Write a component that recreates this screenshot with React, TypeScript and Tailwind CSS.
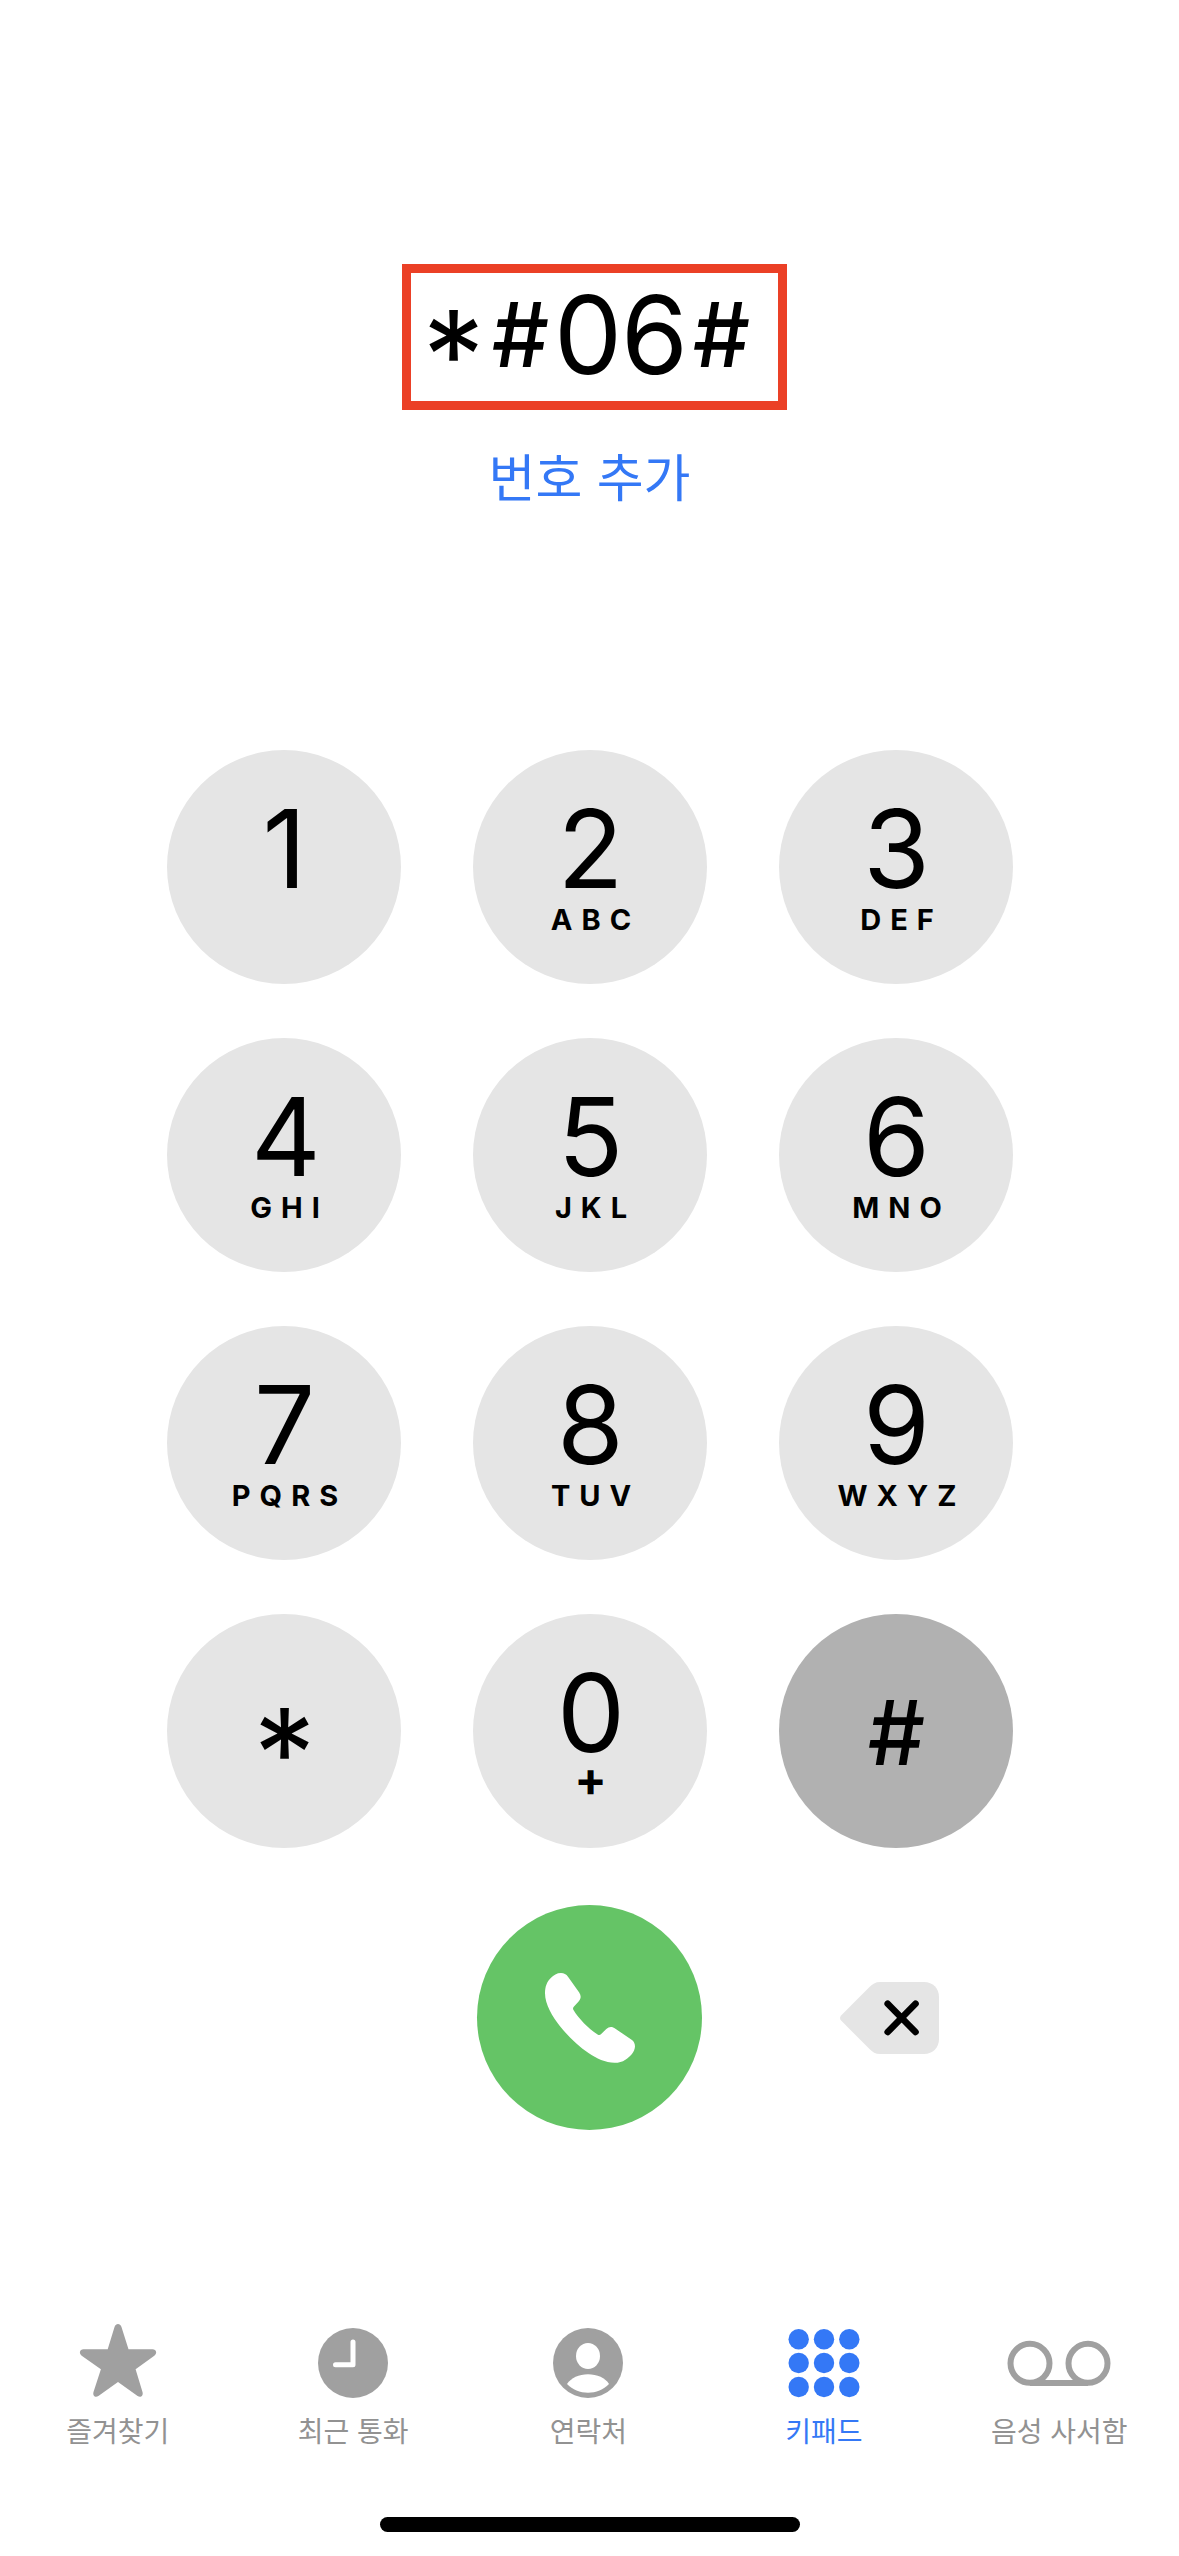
import React, { useState } from "react";

type Key = { symbol: string; letters?: string; pressed?: boolean };

const KEYS: Key[] = [
  { symbol: "1" },
  { symbol: "2", letters: "ABC" },
  { symbol: "3", letters: "DEF" },
  { symbol: "4", letters: "GHI" },
  { symbol: "5", letters: "JKL" },
  { symbol: "6", letters: "MNO" },
  { symbol: "7", letters: "PQRS" },
  { symbol: "8", letters: "TUV" },
  { symbol: "9", letters: "WXYZ" },
  { symbol: "*" },
  { symbol: "0", letters: "+" },
  { symbol: "#", pressed: true },
];

// "*" and "#" have their own sizes and are centred on the digits.
function Glyph({ char }: { char: string }) {
  if (char === "*")
    return <span className="w-[67px] pt-10 text-center text-[124px] leading-[108px]">*</span>;
  if (char === "#")
    return <span className="w-[67px] text-center text-[90px] font-medium leading-[108px]">#</span>;
  return <span className="w-[67px] text-center text-[108px] leading-[108px]">{char}</span>;
}

function KeyButton({ item, onPress }: { item: Key; onPress: (s: string) => void }) {
  const isSign = item.symbol === "*" || item.symbol === "#";
  return (
    <button
      type="button"
      aria-label={item.symbol}
      onClick={() => onPress(item.symbol)}
      className={`flex size-[234px] flex-col items-center rounded-full pl-0.5 text-black ${
        item.pressed ? "bg-[#b1b1b1]" : "bg-[#e5e5e5]"
      } ${isSign ? "justify-center pt-1" : "pt-[45px]"}`}
    >
      <Glyph char={item.symbol} />
      {item.letters === "+" && <span className="text-[48px] font-bold leading-6">+</span>}
      {item.letters && item.letters !== "+" && (
        <span className="pl-[10px] text-[29px] font-bold leading-[34px] tracking-[9px]">{item.letters}</span>
      )}
    </button>
  );
}

function PhoneIcon() {
  return (
    <svg viewBox="0 0 90 90" className="size-[90px]" fill="#fff" aria-hidden="true">
      <path d="M16 0C19 0 21.3 1.2 23 3.7L34.2 19.4C36.4 22.7 36.1 25.8 33.4 28.8L29 33.4C27.9 34.6 27.7 35.6 28.5 37C33.5 45.5 44.5 56.6 52.6 61.5C54 62.3 54.9 62.2 56.2 61L61.3 56.1C64.2 53.4 67.2 53.4 70.4 55.7L86.6 66.8C89 68.4 90 70.6 90 73.6C89.6 79 85.5 83.7 80.4 86.7C77.2 88.9 74 89.8 69.5 89.8C60.5 89.8 51.5 85.3 43.5 80C32.8 72.8 22.7 62.9 14.8 53C7.5 43.8 0 31.5 0 20.3C0 13.8 1.8 8.8 5.8 5C8.7 2 11.8 0 16 0Z" />
    </svg>
  );
}

function DeleteIcon() {
  return (
    <svg viewBox="0 0 99 72" className="h-[72px] w-[99px]" aria-hidden="true">
      <path
        d="M40 0H84C93 0 99 6.5 99 15V57C99 65.5 93 72 84 72H40C35.5 72 32.5 70 29.5 67L1.3 38.8C-.4 37-.4 35 1.3 33.2L29.5 5C32.5 2 35.5 0 40 0Z"
        fill="#e5e5e5"
      />
      <path d="M47.7 21.7L75.5 50M75.5 21.7L47.7 50" stroke="#000" strokeWidth="6.6" strokeLinecap="round" />
    </svg>
  );
}

function TabIcon({ name }: { name: string }) {
  return (
    <svg viewBox="0 0 104 76" className="h-[76px] w-[104px]" fill="currentColor" aria-hidden="true">
      {name === "star" && (
        <path d="M41.7 26.3L48.6 3.7C49.4 1.9 50.5 1 52 1C53.5 1 54.6 1.9 55.4 3.7L62.5 26.3H86.5C90.6 26.3 91.4 30.6 88.3 32.7L69.6 46.3L76.5 69C77.6 73 74.5 75.1 71.6 73L52 59L32.4 73C29.5 75.1 26.4 73 27.5 69L34.9 46.3L15.7 32.7C12.8 30.6 13.4 26.3 17.5 26.3Z" />
      )}
      {name === "clock" && (
        <>
          <circle cx="52" cy="40" r="35" />
          <path d="M52 19V41.7H34.5" fill="none" stroke="#fff" strokeWidth="5" strokeLinecap="round" strokeLinejoin="round" />
        </>
      )}
      {name === "person" && (
        <>
          <circle cx="52" cy="40" r="35" />
          <ellipse cx="52" cy="33" rx="12" ry="13" fill="#fff" />
          <path d="M31 61C35 55 43 51.3 52 51.3S69.5 55 73 61C67.5 66.8 60 69.7 52 69.7S36.5 66.8 31 61Z" fill="#fff" />
        </>
      )}
      {name === "keypad" &&
        [16.3, 40, 64].map((y) => [26.7, 52, 77.3].map((x) => <circle key={`${x}-${y}`} cx={x} cy={y} r="10.2" />))}
      {name === "voicemail" && (
        <g fill="none" stroke="currentColor" strokeWidth="6">
          <circle cx="23" cy="40.3" r="19.5" />
          <circle cx="81" cy="40.3" r="19.5" />
          <path d="M23 59.9H81" />
        </g>
      )}
    </svg>
  );
}

const TABS = [
  { icon: "star", label: "즐겨찾기" },
  { icon: "clock", label: "최근 통화" },
  { icon: "person", label: "연락처" },
  { icon: "keypad", label: "키패드", active: true },
  { icon: "voicemail", label: "음성 사서함" },
];

export default function App() {
  const [number, setNumber] = useState("*#06#");

  return (
    <div className="flex min-h-screen flex-col items-center bg-white pb-6 pt-[264px] font-['Inter','Noto_Sans_CJK_KR',sans-serif]">
      <main className="flex w-full flex-col items-center">
        <output className="ml-[10px] flex h-[146px] items-center border-[9px] border-[#eb4026] pb-1 pl-[9px] pr-[23px] text-black">
          {number.split("").map((char, i) => (
            <Glyph key={i} char={char} />
          ))}
        </output>
        <button type="button" className="mt-[39px] text-[51px] leading-[60px] text-[#3478f6]">
          번호 추가
        </button>

        <div className="mt-[241px] grid grid-cols-3 gap-x-18 gap-y-[54px]">
          {KEYS.map((item) => (
            <KeyButton key={item.symbol} item={item} onPress={(s) => setNumber(number + s)} />
          ))}
          <div className="col-start-2 flex items-center justify-center pt-[3px]">
            <button
              type="button"
              aria-label="통화"
              className="flex size-[225px] items-center justify-center rounded-full bg-[#65c466]"
            >
              <PhoneIcon />
            </button>
          </div>
          <div className="flex items-center justify-center pr-3 pt-[3px]">
            <button type="button" aria-label="삭제" onClick={() => setNumber(number.slice(0, -1))}>
              <DeleteIcon />
            </button>
          </div>
        </div>
      </main>

      <nav className="mt-auto grid w-full grid-cols-5 pr-0.5">
        {TABS.map((tab) => (
          <a
            key={tab.label}
            href="#"
            aria-current={tab.active ? "page" : undefined}
            className={`flex flex-col items-center gap-[13px] ${tab.active ? "text-[#3478f6]" : "text-[#a0a0a0]"}`}
          >
            <TabIcon name={tab.icon} />
            <span className={`text-[28px] leading-10 ${tab.active ? "text-[#3478f6]" : "text-[#929292]"}`}>
              {tab.label}
            </span>
          </a>
        ))}
      </nav>
      <div className="mt-[65px] h-[15px] w-[420px] rounded-full bg-black" />
    </div>
  );
}
